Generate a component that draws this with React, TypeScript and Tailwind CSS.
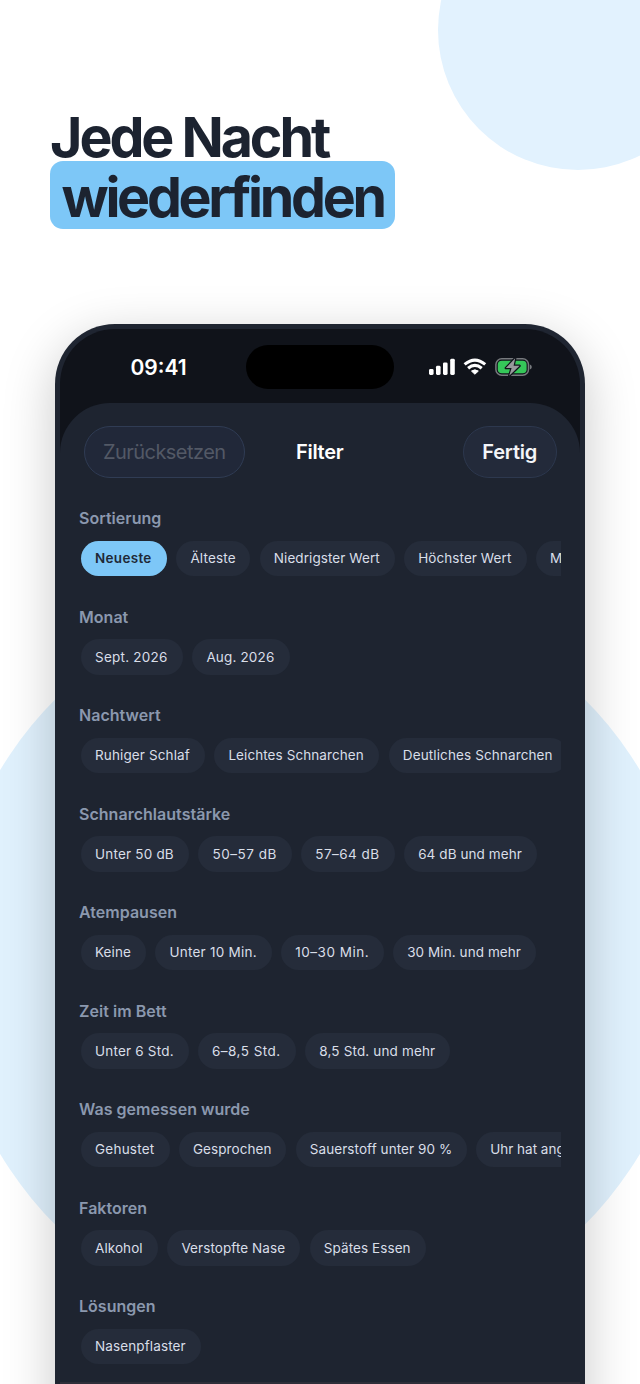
type Chip = { label: string; size: string; track?: string; active?: boolean };

const sections: { title: string; chips: Chip[] }[] = [
  {
    title: "Sortierung",
    chips: [
      { label: "Neueste", size: "w-[86px]", active: true },
      { label: "Älteste", size: "w-[74px]", track: "tracking-[0.15px]" },
      { label: "Niedrigster Wert", size: "w-[135px]" },
      { label: "Höchster Wert", size: "w-[122.5px]" },
      { label: "Meiste Ereignisse", size: "w-[148px]" },
    ],
  },
  {
    title: "Monat",
    chips: [
      { label: "Sept. 2026", size: "w-[102px]", track: "tracking-[0.24px]" },
      { label: "Aug. 2026", size: "w-[97.5px]", track: "tracking-[0.16px]" },
    ],
  },
  {
    title: "Nachtwert",
    chips: [
      { label: "Ruhiger Schlaf", size: "w-[124px]", track: "tracking-[0.12px]" },
      { label: "Leichtes Schnarchen", size: "w-[165px]" },
      { label: "Deutliches Schnarchen", size: "w-[179px]", track: "tracking-[0.12px]" },
    ],
  },
  {
    title: "Schnarchlautstärke",
    chips: [
      { label: "Unter 50 dB", size: "w-[108px]", track: "tracking-[0.2px]" },
      { label: "50–57 dB", size: "w-[93.5px]", track: "tracking-[0.55px]" },
      { label: "57–64 dB", size: "w-[93.5px]", track: "tracking-[0.45px]" },
      { label: "64 dB und mehr", size: "w-[133px]" },
    ],
  },
  {
    title: "Atempausen",
    chips: [
      { label: "Keine", size: "w-[65px]" },
      { label: "Unter 10 Min.", size: "w-[116.5px]", track: "tracking-[0.25px]" },
      { label: "10–30 Min.", size: "w-[102.5px]", track: "tracking-[0.5px]" },
      { label: "30 Min. und mehr", size: "w-[143px]" },
    ],
  },
  {
    title: "Zeit im Bett",
    chips: [
      { label: "Unter 6 Std.", size: "w-[107.5px]", track: "tracking-[0.2px]" },
      { label: "6–8,5 Std.", size: "w-[98px]", track: "tracking-[0.48px]" },
      { label: "8,5 Std. und mehr", size: "w-[145px]", track: "tracking-[0.15px]" },
    ],
  },
  {
    title: "Was gemessen wurde",
    chips: [
      { label: "Gehustet", size: "w-[88.5px]", track: "tracking-[0.24px]" },
      { label: "Gesprochen", size: "w-[107.5px]" },
      { label: "Sauerstoff unter 90 %", size: "w-[171px]" },
      { label: "Uhr hat angezeigt", size: "w-[150px]", track: "tracking-[0px]" },
    ],
  },
  {
    title: "Faktoren",
    chips: [
      { label: "Alkohol", size: "w-[77px]" },
      { label: "Verstopfte Nase", size: "w-[133px]" },
      { label: "Spätes Essen", size: "w-[116px]" },
    ],
  },
  { title: "Lösungen", chips: [{ label: "Nasenpflaster", size: "w-[120px]", track: "tracking-[0.12px]" }] },
];

function StatusIcons() {
  return (
    <svg width="106" height="24" viewBox="0 0 106 24" className="shrink-0">
      <g fill="#fff">
        <rect x="1" y="14" width="4.6" height="6" rx="1.4" />
        <rect x="8" y="10.8" width="4.6" height="9.2" rx="1.4" />
        <rect x="15" y="7.4" width="4.6" height="12.6" rx="1.4" />
        <rect x="22.2" y="3.8" width="4.6" height="16.2" rx="1.4" />
        <path d="M46.9 19.2 L43.5 16.1 Q46.9 13.6 50.3 16.1 Z" stroke="#fff" strokeWidth="1" strokeLinejoin="round" />
      </g>
      <g fill="none" stroke="#fff" strokeWidth="3.1">
        <path d="M36.6 9.4 Q46.9 0.7 57.2 9.4" />
        <path d="M40.1 13.3 Q46.9 7.5 53.7 13.3" />
      </g>
      <rect x="67.9" y="3.8" width="32.6" height="16.4" rx="5.8" fill="none" stroke="#777a7e" strokeWidth="1.5" />
      <path d="M101.9 9.6 Q103.8 10.4 103.8 12 Q103.8 13.6 101.9 14.4 Z" fill="#777a7e" />
      <rect x="69.8" y="5.7" width="28.8" height="12.6" rx="4" fill="#35c759" />
      <path
        d="M87.2 3.2 L77.8 13.1 L83.6 13.1 L81.2 20.8 L91.6 10.8 L85.6 10.8 Z"
        fill="#97999c"
        stroke="#10131a"
        strokeWidth="2.4"
        strokeLinejoin="round"
        paintOrder="stroke"
      />
    </svg>
  );
}

function ChipPill({ chip }: { chip: Chip }) {
  const tone = chip.active
    ? "bg-[#7dc7f7] text-[#1f2937] font-semibold tracking-[0.3px]"
    : `bg-[#252c3a] text-[#d9dee8] ${chip.track ?? "tracking-[0.08px]"}`;
  return (
    <div className={`flex h-[35.5px] shrink-0 items-center whitespace-nowrap rounded-full pl-[14px] text-[13.5px] ${chip.size} ${tone}`}>
      {chip.label}
    </div>
  );
}

export default function App() {
  return (
    <main className="relative h-[1384px] w-[640px] overflow-hidden bg-white font-['Inter',sans-serif]">
      <div className="absolute left-[438px] top-[-110px] size-[280px] rounded-full bg-[#e2f2fe]" />
      <div className="absolute left-[-53px] top-[589px] size-[746px] rounded-full bg-[#e0f1fd]" />

      <div className="relative flex h-full flex-col">
        <h1 className="flex h-[324px] shrink-0 flex-col items-start pl-[50px] pt-[107px] text-[55.5px] font-bold leading-[60px] text-[#1c2330]">
          <span className="block h-[54px] whitespace-nowrap tracking-[-3.05px]">Jede Nacht</span>
          <span className="flex h-[68px] w-[345px] items-center whitespace-nowrap rounded-[13px] bg-[#7dc7f7] pl-[11.5px] pt-[4px] tracking-[-3.3px]">wiederfinden</span>
        </h1>

        <div className="mx-[55px] h-[1150px] shrink-0 rounded-t-[60px] bg-[#1f2531] px-[5px] pt-[5px] shadow-[0_14px_52px_rgba(0,0,0,0.22)]">
          <div className="flex h-full flex-col overflow-hidden rounded-t-[55px] bg-[#10131a]">
            <header className="flex h-[74px] shrink-0 items-center">
              <time className="w-[186px] pl-[70.5px] pt-[3px] text-[21px] font-semibold leading-6 text-white">09:41</time>
              <div className="mt-[2px] h-[44px] w-[148px] shrink-0 rounded-full bg-black" />
              <div className="pl-[34px] pt-[2px]">
                <StatusIcons />
              </div>
            </header>

            <section className="flex grow flex-col overflow-hidden rounded-t-[50px] bg-[#1e2430]">
              <div className="flex h-[76px] shrink-0 items-center px-[23.5px] pt-[22px] text-[20px]">
                <button className="h-[52px] w-[161.5px] rounded-full border border-[#303c54] bg-[#212839] tracking-[-0.55px] text-[#535966]">Zurücksetzen</button>
                <h2 className="w-[218px] pl-[51px] font-semibold tracking-[-0.3px] text-white">Filter</h2>
                <button className="h-[52px] w-[93.5px] rounded-full border border-[#2d384e] bg-[#232a3a] font-semibold tracking-[-0.2px] text-[#f4f5f8]">Fertig</button>
              </div>

              <div className="flex flex-col px-[19px] pt-[27px]">
                {sections.map((s) => (
                  <div key={s.title} className="h-[98.5px] shrink-0 overflow-hidden">
                    <h3 className="h-[34.5px] text-[16px] font-semibold leading-6 tracking-[0.03px] text-[#8b98ae]">{s.title}</h3>
                    <div className="flex gap-[9.4px] overflow-hidden pl-[2px]">
                      {s.chips.map((c) => (
                        <ChipPill key={c.label} chip={c} />
                      ))}
                    </div>
                  </div>
                ))}
              </div>
            </section>
          </div>
        </div>
      </div>
      <div className="absolute bottom-0 left-[60px] h-[2px] w-[520px] bg-[#2d2e39]" />
    </main>
  );
}
